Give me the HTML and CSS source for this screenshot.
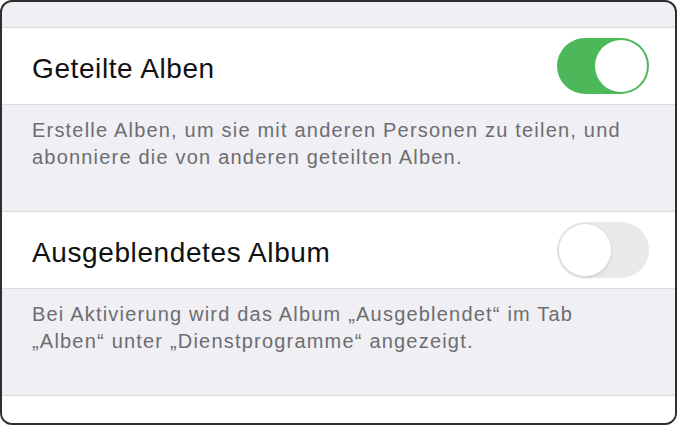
FILE: index.html
```html
<!DOCTYPE html>
<html lang="de">
<head>
    <meta charset="UTF-8">
    <meta name="viewport" content="width=device-width, initial-scale=1.0">
    <title>Fotos – Einstellungen</title>
    <link rel="stylesheet" href="styles.css">
</head>
<body>
    <div class="frame">
        <div class="spacer"></div>

        <div class="row">
            <span class="row-label">Geteilte Alben</span>
            <span class="switch switch-on"><span class="knob"></span></span>
        </div>
        <div class="footer">
            <p>Erstelle Alben, um sie mit anderen Personen zu teilen, und abonniere die von anderen geteilten Alben.</p>
        </div>

        <div class="row">
            <span class="row-label">Ausgeblendetes Album</span>
            <span class="switch switch-off"><span class="knob"></span></span>
        </div>
        <div class="footer">
            <p>Bei Aktivierung wird das Album „Ausgeblendet“ im Tab „Alben“ unter „Dienstprogramme“ angezeigt.</p>
        </div>

        <div class="row row-cut"></div>
    </div>
</body>
</html>
```

FILE: styles.css
```css
* {
    margin: 0;
    padding: 0;
    box-sizing: border-box;
}

body {
    font-family: 'Liberation Sans', Arial, sans-serif;
    background: #fff;
}

.frame {
    width: 677px;
    height: 425px;
    border: 2px solid #2e2e30;
    border-radius: 12px;
    background: #efeff4;
    overflow: hidden;
}

.spacer {
    height: 25px;
}

.row {
    height: 78px;
    background: #fff;
    border-top: 1px solid #dcdce0;
    border-bottom: 1px solid #dcdce0;
    display: flex;
    align-items: center;
    justify-content: space-between;
    padding: 0 26px 0 30px;
}

.row-label {
    font-size: 28px;
    letter-spacing: 0.6px;
    color: #111;
    padding-top: 5px;
}

.footer {
    height: 106px;
    padding: 12px 30px 0 30px;
    color: #6d6d72;
    font-size: 20px;
    letter-spacing: 1.2px;
    line-height: 27px;
}

.switch {
    width: 92px;
    height: 56px;
    border-radius: 28px;
    display: flex;
    align-items: center;
    padding: 0 2px;
}

.knob {
    width: 52px;
    height: 52px;
    border-radius: 50%;
    background: #fff;
}

.switch-on {
    background: #4cb85a;
    justify-content: flex-end;
}

.switch-off {
    background: #e9e9eb;
    justify-content: flex-start;
}

.switch-off .knob {
    box-shadow: 0 0 0 1px #dcdcdc, 0 2px 3px rgba(0, 0, 0, 0.12);
}

.row-cut {
    height: 40px;
    border-bottom: none;
}
```
